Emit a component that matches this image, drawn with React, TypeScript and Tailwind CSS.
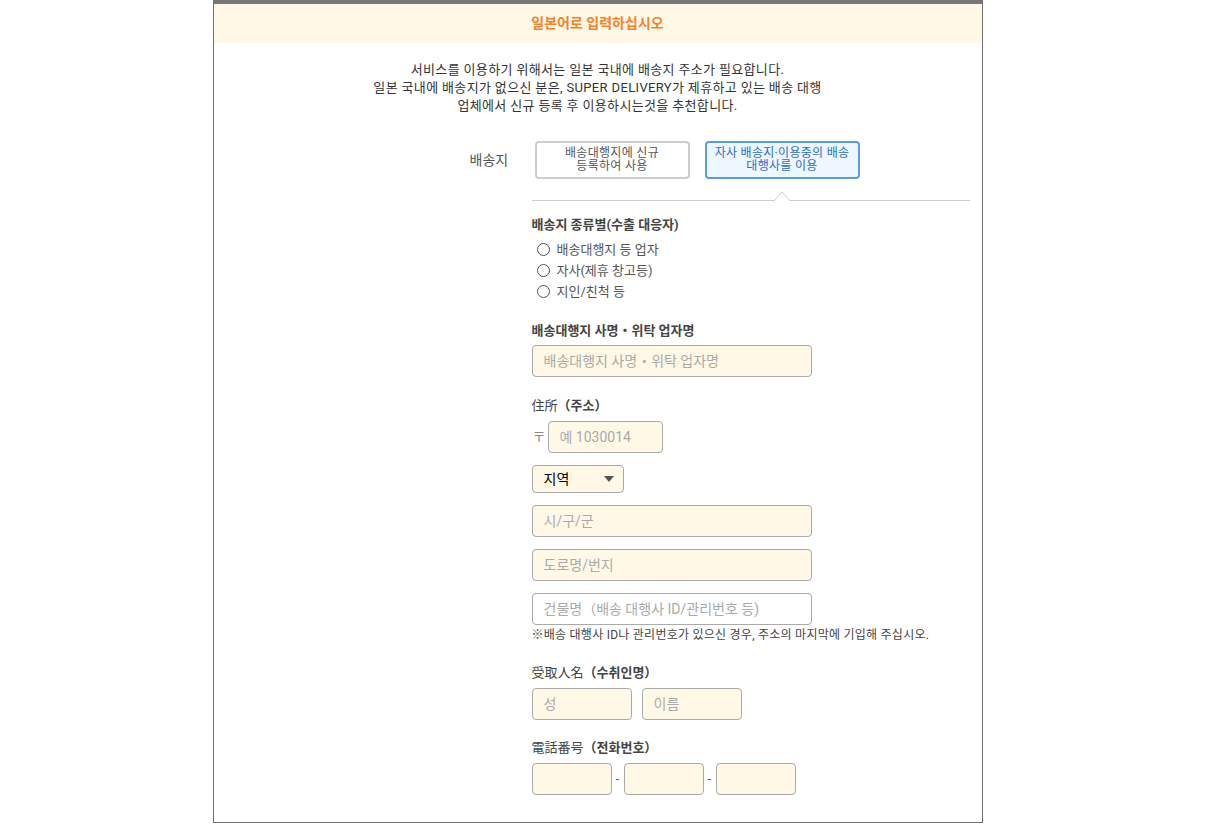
import React from 'react';

const font = { fontFamily: 'Roboto, "Noto Sans CJK KR", "Noto Sans CJK JP", sans-serif' };

function Field({ placeholder, className = '', white = false }: { placeholder?: string; className?: string; white?: boolean }) {
  return (
    <input
      placeholder={placeholder}
      className={`h-[32px] rounded-[4px] border border-[#aaa] px-[11px] text-[14px] text-[#333] placeholder:text-[#aaa] outline-none ${white ? 'bg-white' : 'bg-[#fff8e6]'} ${className}`}
      style={font}
    />
  );
}

function Radio({ label }: { label: string }) {
  return (
    <label className="flex h-[21px] items-center gap-[7px] pl-[5px] text-[13px] text-[#555]">
      <span className="h-[13px] w-[13px] rounded-full border border-[#555] bg-white" />
      {label}
    </label>
  );
}

function Label({ ja, ko, className = '' }: { ja?: string; ko: string; className?: string }) {
  return (
    <div className={`h-[18px] text-[13px] leading-[18px] text-[#444] ${className}`}>
      {ja && <span className="font-normal">{ja}</span>}
      <span className="font-bold">{ko}</span>
    </div>
  );
}

export default function App() {
  return (
    <div className="w-[1195px] bg-white" style={font}>
      <div className="mx-auto w-[770px] border-x border-b border-t-4 border-[#707070] border-t-[#777] bg-white pb-[27px]">
        <div className="flex h-[39px] items-center justify-center bg-[#fff8e6] text-[14px] font-bold text-[#f5822a]">
          일본어로 입력하십시오
        </div>

        <p className="mt-[18px] text-center text-[13px] leading-[18px] tracking-[0.35px] text-[#333]">
          서비스를 이용하기 위해서는 일본 국내에 배송지 주소가 필요합니다.
          <br />
          일본 국내에 배송지가 없으신 분은, SUPER DELIVERY가 제휴하고 있는 배송 대행
          <br />
          업체에서 신규 등록 후 이용하시는것을 추천합니다.
        </p>

        <div className="ml-[256px] mt-[26px] flex items-center">
          <div className="w-[65px] text-[14px] text-[#555]">배송지</div>
          <div className="flex gap-[15px]">
            <button className="flex h-[38px] w-[155px] items-center justify-center rounded-[4px] border-2 border-[#ccc] bg-white text-[12px] leading-[13px] tracking-[0.3px] text-[#555]">
              배송대행지에 신규
              <br />
              등록하여 사용
            </button>
            <button className="flex h-[38px] w-[155px] items-center justify-center rounded-[4px] border-2 border-[#5b9be0] bg-[#eef6ff] text-[12px] leading-[13px] tracking-[0.3px] text-[#2a6fc4]">
              자사 배송지·이용중의 배송
              <br />
              대행사를 이용
            </button>
          </div>
        </div>

        <div className="ml-[318px] w-[438px]">
          <div className="relative mt-[21px] border-t border-[#ccc]">
            <svg className="absolute left-[242px] top-[-10px]" width="16" height="11" viewBox="0 0 16 11">
              <polyline points="0,10 8,1 16,10" fill="white" stroke="#ccc" strokeWidth="1" />
              <rect x="1" y="10" width="14" height="1" fill="white" />
            </svg>
          </div>

          <Label ko="배송지 종류별(수출 대응자)" className="mt-[15px]" />
          <div className="mt-[5px] flex flex-col">
            <Radio label="배송대행지 등 업자" />
            <Radio label="자사(제휴 창고등)" />
            <Radio label="지인/친척 등" />
          </div>

          <Label ko="배송대행지 사명・위탁 업자명" className="mt-[20px]" />
          <Field placeholder="배송대행지 사명・위탁 업자명" className="mt-[5px] w-[280px]" />

          <Label ja="住所" ko="（주소）" className="mt-[20px]" />
          <div className="mt-[6px] flex items-center gap-[5px]">
            <span className="w-[11px] pl-[1px] text-[13px] text-[#888]">〒</span>
            <Field placeholder="예 1030014" className="w-[115px]" />
          </div>

          <div className="mt-[12px] flex h-[28px] w-[92px] items-center justify-between rounded-[4px] border border-[#aaa] bg-[#fff8e6] pl-[11px] pr-[9px] text-[14px] text-black">
            지역
            <span className="h-0 w-0 border-x-[5px] border-t-[6px] border-x-transparent border-t-[#555]" />
          </div>

          <div className="mt-[12px] flex flex-col gap-[12px]">
            <Field placeholder="시/구/군" className="w-[280px]" />
            <Field placeholder="도로명/번지" className="w-[280px]" />
            <Field placeholder="건물명（배송 대행사 ID/관리번호 등)" className="w-[280px]" white />
          </div>
          <div className="mt-[2px] h-[16px] whitespace-nowrap text-[12px] leading-[16px] tracking-[0.25px] text-[#444]">
            ※배송 대행사 ID나 관리번호가 있으신 경우, 주소의 마지막에 기입해 주십시오.
          </div>

          <Label ja="受取人名" ko="（수취인명）" className="mt-[21px]" />
          <div className="mt-[6px] flex gap-[10px]">
            <Field placeholder="성" className="w-[100px]" />
            <Field placeholder="이름" className="w-[100px]" />
          </div>

          <Label ja="電話番号" ko="（전화번호）" className="mt-[19px]" />
          <div className="mt-[6px] flex items-center">
            <Field className="w-[80px]" />
            <span className="w-[12px] text-center text-[12px] text-[#555]">-</span>
            <Field className="w-[80px]" />
            <span className="w-[12px] text-center text-[12px] text-[#555]">-</span>
            <Field className="w-[80px]" />
          </div>
        </div>
      </div>
    </div>
  );
}
